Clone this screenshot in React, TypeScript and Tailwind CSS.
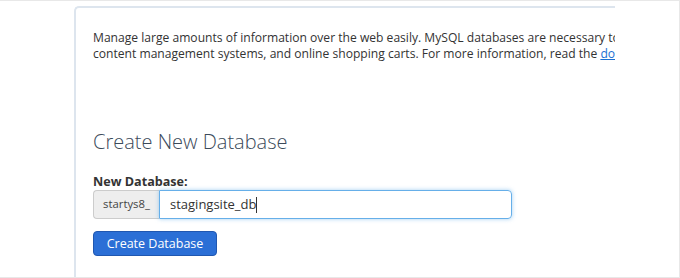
import React from "react";

export default function App() {
  return (
    <div className="w-[680px] h-[278px] bg-white border-t border-r border-b border-[#e8e8e8] overflow-hidden font-['Open_Sans',sans-serif]">
      <div className="pl-[74px] pt-[5px] h-full">
        <div className="w-[541px] h-full overflow-hidden">
          <div className="w-[700px] h-full border-l-2 border-t-2 border-[#dde5ee] rounded-tl-[5px] pl-[17px] pt-[22px]">
            <p className="text-[12.1px] leading-[16px] text-[#333] whitespace-nowrap">
              Manage large amounts of information over the web easily. MySQL databases are necessary to run many web-based applications, such as bulletin boards,
              <br />
              content management systems, and online shopping carts. For more information, read the{" "}
              <a className="text-[#1a6fd3] underline">documentation</a>.
            </p>
            <h2 className="mt-[66px] text-[20px] leading-[28px] font-light text-[#3b4a5a]">Create New Database</h2>
            <label className="block mt-[18px] text-[12.6px] leading-[16px] font-bold text-[#333]">New Database:</label>
            <div className="flex h-[29px]">
              <span className="w-[66px] flex items-center justify-center bg-[#eeeeee] border border-[#cccccc] border-r-0 rounded-l-[4px] text-[11.3px] text-[#444]">
                startys8_
              </span>
              <div className="w-[353px] flex items-center pl-[10px] border border-[#66afe9] rounded-r-[4px] shadow-[0_0_4px_rgba(102,175,233,0.6)] text-[13px] text-[#333]">
                stagingsite_db<span className="inline-block w-px h-[16px] bg-[#333]"></span>
              </div>
            </div>
            <button className="mt-[12px] w-[124px] h-[25px] bg-[#2b6fd6] border border-[#2057b0] rounded-[4px] text-white text-[12.5px] leading-[20px]">
              Create Database
            </button>
          </div>
        </div>
      </div>
    </div>
  );
}
